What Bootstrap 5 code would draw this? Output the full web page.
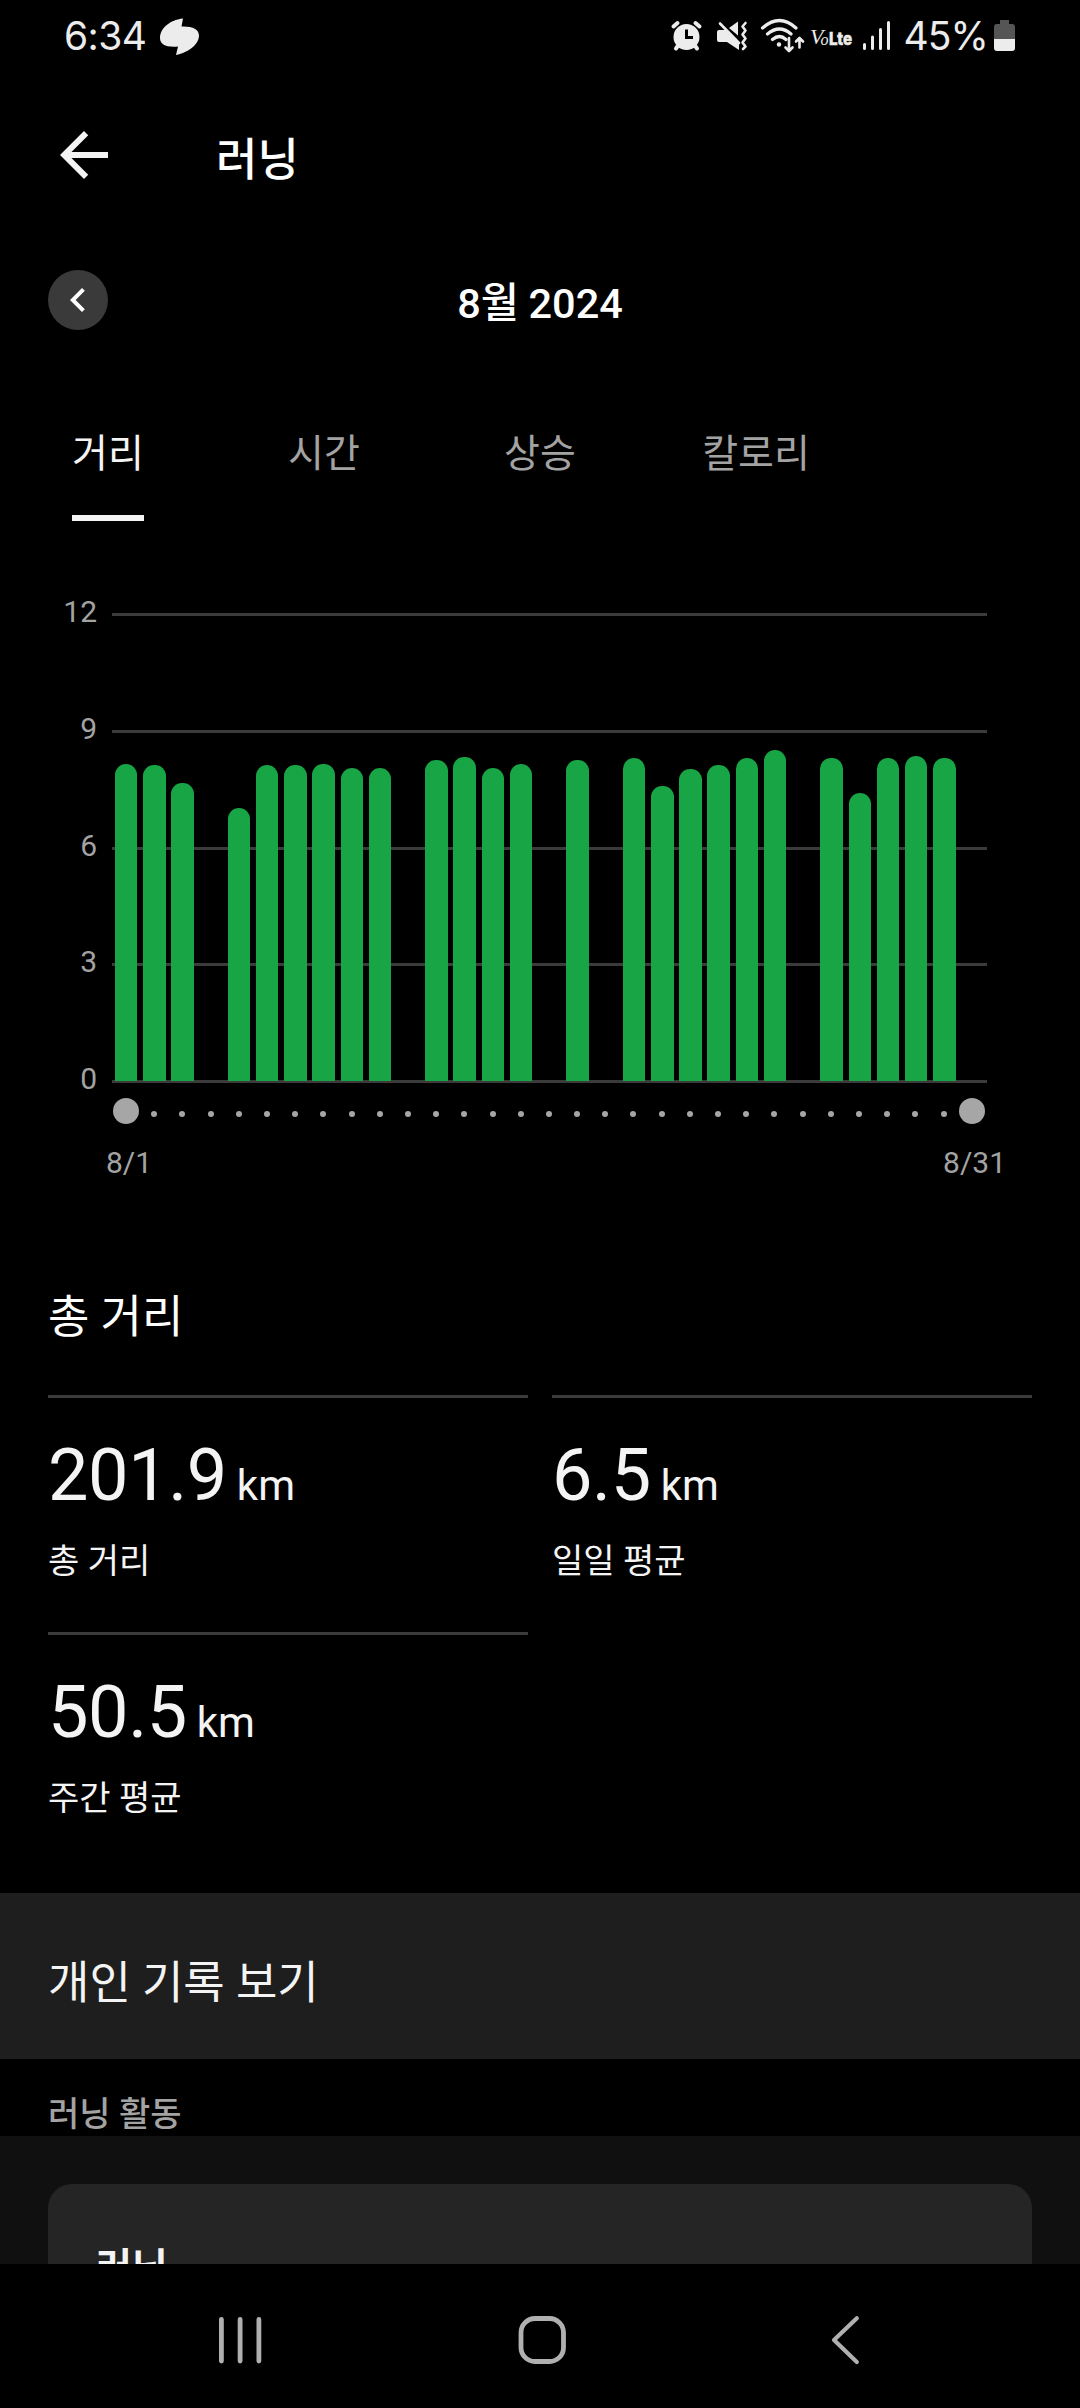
<!DOCTYPE html>
<html lang="ko" data-bs-theme="dark">
<head>
<meta charset="utf-8">
<meta name="viewport" content="width=device-width, initial-scale=1">
<title>러닝</title>
<link rel="stylesheet" href="https://cdn.jsdelivr.net/npm/bootstrap@5.3.0/dist/css/bootstrap.min.css">
<style>
  :root { --ink: #f4f4f4; --muted: #a3a3a3; --rule: #3b3b3b; --bar: #18a545; }
  body { background: #000; color: var(--ink); font-family: Roboto, "Noto Sans CJK KR", sans-serif; line-height: 1.2; }
  .screen { width: 1080px; height: 2408px; overflow: hidden; }
  .gutter { padding-left: 48px; padding-right: 48px; }
  .statusbar { height: 71px; padding: 0 64px 0 64px; color: #ececec; font-family: Inter, Roboto, sans-serif; font-size: 39px; font-weight: 400; line-height: 48px; }
  .statusbar svg { display: block; }
  .clock { letter-spacing: -.6px; }
  .level { letter-spacing: -.9px; }
  .topbar { height: 167px; }
  .topbar h1 { font-size: 45px; font-weight: 500; margin: 13px 0 0 96px; }
  .monthbar { height: 124px; }
  .monthbar h2 { font-size: 41.5px; font-weight: 500; letter-spacing: 0; word-spacing: -.8px; margin: 7px 0 0; padding-right: 60px; }
  .prev-btn { width: 60px; height: 60px; background: #3a3a3a; border: 0; }
  .metric-tabs { height: 159px; --bs-nav-link-padding-x: 0; --bs-nav-link-padding-y: 0; }
  .metric-tabs .nav-item { width: 216px; }
  .metric-tabs .nav-link { height: 159px; padding: 69px 0 0; font-size: 39px; color: var(--muted); border-bottom: 6px solid transparent; }
  .metric-tabs .nav-link.active { color: var(--ink); border-color: var(--ink); }
  .chart { height: 743px; padding-top: 92px; }
  .y-axis { width: 97px; height: 506px; margin: -21px 0 -15px; font-size: 30px; line-height: 39px; color: var(--muted); }
  .plot { width: 875px; height: 470px; margin-left: 15px; }
  .grid-line { height: 3px; background: var(--rule); }
  .day-bars { height: 468px; }
  .day-cell { flex: 1 1 0; }
  .day-bar { width: 22.5px; background: var(--bar); border-radius: 11px 11px 0 0; }
  .day-track { width: 874px; height: 26px; margin: 15px 0 0 112px; }
  .tick-dot { width: 6px; height: 6px; margin-top: 6px; background: #a6a6a6; }
  .end-dot { width: 26px; height: 26px; flex: none; background: #a6a6a6; }
  .x-axis { font-size: 30px; line-height: 36px; color: var(--muted); padding: 21px 74px 0 106px; }
  .totals { height: 629px; padding-top: 27px; }
  .section-title { font-size: 45px; font-weight: 400; line-height: 54px; margin: 0 0 50px; }
  .stat-cell { height: 237px; border-top: 3px solid var(--rule); padding-top: 36px; }
  .figure-num { height: 84px; font-size: 72px; line-height: 84px; letter-spacing: -.4px; }
  .figure-unit { font-size: 42px; line-height: 42px; margin-left: 10px; letter-spacing: 0; }
  .figure-label { font-size: 34px; line-height: 42px; margin-top: 22px; }
  .records { height: 166px; background: #1e1e1e; font-size: 45px; padding-top: 15px; }
  .list-label { height: 77px; font-size: 34px; font-weight: 500; color: var(--muted); padding-top: 35px; line-height: 40px; }
  .feed { height: 128px; background: #101010; padding-top: 48px; overflow: hidden; }
  .activity { --bs-card-bg: #252525; border: 0; border-radius: 24px; padding: 60px 48px; height: 220px; font-size: 39px; font-weight: 600; line-height: 48px; color: var(--ink); }
  .sysnav { height: 144px; }
  .sysnav svg { display: block; }
</style>
</head>
<body>
<div class="screen d-flex flex-column">

  <header class="statusbar d-flex align-items-center justify-content-between flex-shrink-0">
    <div class="d-flex align-items-center">
      <span class="clock">6:34</span>
      <svg class="ms-2 me-auto ps-1" width="46" height="40" viewBox="157 15 42 40"><path fill="#ececec" d="M182 17.500 C168 19 159 28 159 37 C159 43.500 165 46.500 177 45.500 L175 54 C188 51.500 198 43 198 34.500 C198 28 191 25 180.500 25.500Z"/></svg>
    </div>
    <div class="d-flex align-items-center">
      <svg width="42" height="40" viewBox="669 15 42 40" fill="#ececec" stroke="#ececec">
        <circle cx="686.5" cy="36" r="13" stroke="none"/>
        <path d="M673.500 25.500l4-3.500M699.500 25.500l-4-3.500M678.500 44l-2.500 3.500M694.500 44l2.500 3.500" stroke-width="4" stroke-linecap="round" fill="none"/>
        <path d="M686.500 28.500v8h6.500" stroke="#000" stroke-width="3" fill="none"/>
      </svg>
      <svg width="46" height="40" viewBox="711 15 46 40" fill="#ececec">
        <path d="M719 29h6L739 41V49L727 41h-8q-2 0-2-2v-8q0-2 2-2z"/>
        <path d="M729 27L738 20.500V34.500z"/>
        <path d="M720 22.500l19 19.500" stroke="#ececec" stroke-width="2.600" stroke-linecap="round"/>
        <path d="M745.500 22l-3 3.500 3 4-3 4 3 4-3 4 3 4-2.500 2.500" fill="none" stroke="#ececec" stroke-width="2.600" stroke-linecap="round" stroke-linejoin="round"/>
      </svg>
      <svg width="50" height="40" viewBox="757 15 50 40" fill="none" stroke="#ececec" stroke-width="3.200" stroke-linecap="round">
        <path d="M762.500 27q17-15 33.500 0M767.500 33q12-10 23.500 0M772.500 38.500q7-6 13.500 0"/>
        <circle cx="779" cy="43.500" r="2.200" fill="#ececec" stroke="none"/>
        <path stroke-width="2.600" stroke-linejoin="round" d="M789 37v12.500M785.500 46.500l3.500 3.500 3.500-3.500M799.500 46.500V37.500M796 40.500l3.500-3.500 3.500 3.500"/>
      </svg>
      <svg width="50" height="40" viewBox="807 15 50 40" fill="#ececec">
        <text y="43" font-family="Liberation Serif" font-style="italic"><tspan x="810" font-size="22">V</tspan><tspan x="820.500" dy=".8" font-size="16">o</tspan></text>
        <text x="829" y="43.800" font-family="Inter" font-weight="800" font-size="17.500" stroke="#ececec" stroke-width=".5" textLength="23" lengthAdjust="spacingAndGlyphs">Lte</text>
      </svg>
      <svg width="47" height="40" viewBox="857 15 47 40" stroke="#ececec" stroke-width="3" stroke-linecap="round">
        <path d="M864.500 43.500v4M872.500 36v11.500M880.500 28.500v19M888.500 21.500v26"/>
      </svg>
      <span class="level">45%</span>
      <svg class="ms-1" width="24" height="40" viewBox="993 15 24 40">
        <path fill="#555" d="M1001 19h9v4h3q3 0 3 3v12h-21v-12q0-3 3-3h3z"/>
        <path fill="#ececec" d="M995 38h21v9q0 3-3 3h-15q-3 0-3-3z"/>
      </svg>
    </div>
  </header>

  <div class="topbar gutter d-flex align-items-center flex-shrink-0">
    <svg width="72" height="72" viewBox="0 0 24 24" fill="#f4f4f4"><path d="M20 11H7.830l5.590-5.590L12 4l-8 8 8 8 1.410-1.410L7.830 13H20v-2z"/></svg>
    <h1>러닝</h1>
  </div>

  <div class="monthbar gutter d-flex align-items-center flex-shrink-0">
    <button class="prev-btn rounded-circle p-0 d-flex align-items-center justify-content-center" type="button" aria-label="이전 달">
      <svg width="48" height="48" viewBox="0 0 24 24" fill="#fff"><path d="M15.410 7.410L14 6l-6 6 6 6 1.410-1.410L10.830 12z"/></svg>
    </button>
    <h2 class="flex-fill text-center">8월 2024</h2>
  </div>

  <ul class="metric-tabs nav flex-shrink-0">
    <li class="nav-item d-flex justify-content-center"><a class="nav-link active" href="#">거리</a></li>
    <li class="nav-item d-flex justify-content-center"><a class="nav-link" href="#">시간</a></li>
    <li class="nav-item d-flex justify-content-center"><a class="nav-link" href="#">상승</a></li>
    <li class="nav-item d-flex justify-content-center"><a class="nav-link" href="#">칼로리</a></li>
  </ul>

  <section class="chart flex-shrink-0">
    <div class="d-flex align-items-start">
      <div class="y-axis d-flex flex-column justify-content-between text-end">
        <span>12</span><span>9</span><span>6</span><span>3</span><span>0</span>
      </div>
      <div class="plot position-relative">
        <div class="h-100 d-flex flex-column justify-content-between">
          <div class="grid-line"></div><div class="grid-line"></div><div class="grid-line"></div><div class="grid-line"></div><div class="grid-line"></div>
        </div>
        <div class="day-bars position-absolute top-0 start-0 w-100 d-flex align-items-end" id="bars"></div>
      </div>
    </div>
    <div class="day-track d-flex align-items-center" id="track"></div>
    <div class="x-axis d-flex justify-content-between"><span>8/1</span><span>8/31</span></div>
  </section>

  <section class="totals gutter flex-shrink-0">
    <h3 class="section-title">총 거리</h3>
    <div class="row gx-4">
      <div class="col-6"><div class="stat-cell">
        <div class="figure-num">201.9<span class="figure-unit">km</span></div>
        <div class="figure-label">총 거리</div>
      </div></div>
      <div class="col-6"><div class="stat-cell">
        <div class="figure-num">6.5<span class="figure-unit">km</span></div>
        <div class="figure-label">일일 평균</div>
      </div></div>
      <div class="col-6"><div class="stat-cell">
        <div class="figure-num">50.5<span class="figure-unit">km</span></div>
        <div class="figure-label">주간 평균</div>
      </div></div>
    </div>
  </section>

  <div class="records gutter d-flex align-items-center flex-shrink-0">개인 기록 보기</div>
  <div class="list-label gutter flex-shrink-0">러닝 활동</div>
  <section class="feed gutter flex-shrink-0">
    <div class="activity card">러닝</div>
  </section>

  <nav class="sysnav flex-shrink-0">
    <svg width="1080" height="144" viewBox="0 2264 1080 144" fill="none" stroke="#b0b0b0" stroke-linecap="round" stroke-linejoin="round">
      <path stroke-width="4.800" d="M221.400 2319.500v41.500M240.100 2319.500v41.500M258.900 2319.500v41.500"/>
      <rect stroke-width="4.800" x="521" y="2318.500" width="42.500" height="43" rx="14"/>
      <path stroke-width="4.200" d="M856.800 2318.300L834 2340l22.800 22"/>
    </svg>
  </nav>
</div>

<script src="https://cdn.jsdelivr.net/npm/bootstrap@5.3.0/dist/js/bootstrap.bundle.min.js"></script>
<script>
  // Kilometres per day, 1–31 August; 0 is a rest day
  const km = [8.15, 8.12, 7.67, 0, 7.01, 8.12, 8.12, 8.15, 8.04, 8.04, 0, 8.25, 8.33, 8.04, 8.15, 0,
              8.25, 0, 8.30, 7.58, 8.02, 8.12, 8.30, 8.51, 0, 8.30, 7.40, 8.30, 8.35, 8.30, 0];
  const axisMax = 12, axisHeight = 467;
  document.getElementById('bars').innerHTML = km.map(v =>
    '<div class="day-cell d-flex justify-content-center">' +
    (v ? '<div class="day-bar" style="height:' + (v / axisMax * axisHeight).toFixed(1) + 'px"></div>' : '') +
    '</div>').join('');
  document.getElementById('track').innerHTML = km.map((v, i) =>
    '<div class="day-cell d-flex justify-content-center align-items-center">' +
    '<div class="rounded-circle ' + (i === 0 || i === km.length - 1 ? 'end-dot' : 'tick-dot') + '"></div></div>').join('');
</script>
</body>
</html>
